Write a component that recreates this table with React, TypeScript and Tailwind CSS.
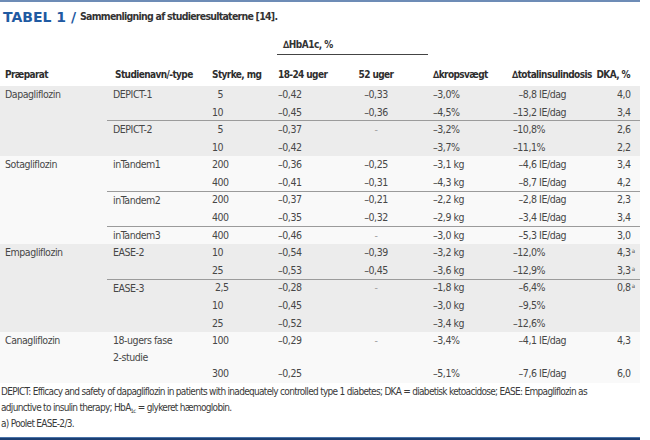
import React from "react";

type DataRow = {
  s: string;
  a: string;
  b: string;
  k: string;
  t: string;
  d: string;
  sup?: boolean;
  sIndent?: string;
};

type Study = { name: string; rows: DataRow[] };
type Group = { drug: string; bg: string; studies: Study[] };

const F = "\u2007";

const groups: Group[] = [
  {
    drug: "Dapagliflozin",
    bg: "bg-[#ececec]",
    studies: [
      {
        name: "DEPICT-1",
        rows: [
          { s: F + "5", a: "–0,42", b: "–0,33", k: "–3,0%", t: F + "–8,8 IE/dag", d: "4,0" },
          { s: "10", a: "–0,45", b: "–0,36", k: "–4,5%", t: "–13,2 IE/dag", d: "3,4" },
        ],
      },
      {
        name: "DEPICT-2",
        rows: [
          { s: F + "5", a: "–0,37", b: "-", k: "–3,2%", t: "–10,8%", d: "2,6" },
          { s: "10", a: "–0,42", b: "", k: "–3,7%", t: "–11,1%", d: "2,2" },
        ],
      },
    ],
  },
  {
    drug: "Sotagliflozin",
    bg: "bg-[#f9f9f9]",
    studies: [
      {
        name: "inTandem1",
        rows: [
          { s: "200", a: "–0,36", b: "–0,25", k: "–3,1 kg", t: F + "–4,6 IE/dag", d: "3,4" },
          { s: "400", a: "–0,41", b: "–0,31", k: "–4,3 kg", t: F + "–8,7 IE/dag", d: "4,2" },
        ],
      },
      {
        name: "inTandem2",
        rows: [
          { s: "200", a: "–0,37", b: "–0,21", k: "–2,2 kg", t: F + "–2,8 IE/dag", d: "2,3" },
          { s: "400", a: "–0,35", b: "–0,32", k: "–2,9 kg", t: F + "–3,4 IE/dag", d: "3,4" },
        ],
      },
      {
        name: "inTandem3",
        rows: [{ s: "400", a: "–0,46", b: "-", k: "–3,0 kg", t: F + "–5,3 IE/dag", d: "3,0" }],
      },
    ],
  },
  {
    drug: "Empagliflozin",
    bg: "bg-[#ececec]",
    studies: [
      {
        name: "EASE-2",
        rows: [
          { s: "10", a: "–0,54", b: "–0,39", k: "–3,2 kg", t: "–12,0%", d: "4,3", sup: true },
          { s: "25", a: "–0,53", b: "–0,45", k: "–3,6 kg", t: "–12,9%", d: "3,3", sup: true },
        ],
      },
      {
        name: "EASE-3",
        rows: [
          { s: "2,5", a: "–0,28", b: "-", k: "–1,8 kg", t: F + "–6,4%", d: "0,8", sup: true, sIndent: "pl-[3px]" },
          { s: "10", a: "–0,45", b: "", k: "–3,0 kg", t: F + "–9,5%", d: "" },
          { s: "25", a: "–0,52", b: "", k: "–3,4 kg", t: "–12,6%", d: "" },
        ],
      },
    ],
  },
];

function DataCells({ r }: { r: DataRow }) {
  return (
    <>
      <div className={`w-[60px] whitespace-pre ${r.sIndent ?? ""}`}>{r.s}</div>
      <div className="w-[73px] pl-[6px]">{r.a}</div>
      <div className="w-[60px] text-center pl-[2px]">
        {r.b === "-" ? <span className="text-[#a0a0a0]">-</span> : r.b}
      </div>
      <div className="w-[100px] pl-[28px] whitespace-nowrap">{r.k}</div>
      <div className="w-[95px] pl-[8px] whitespace-pre">{r.t}</div>
      <div className="w-[40px] pl-[17px] whitespace-nowrap">
        {r.d}
        {r.sup && <span className="text-[6px] relative -top-[3px] ml-[1px]">a</span>}
      </div>
    </>
  );
}

export default function App() {
  return (
    <div
      className="w-[650px] h-[440px] bg-white overflow-hidden text-[#474747]"
      style={{ fontFamily: '"DejaVu Sans Condensed", "Liberation Sans", sans-serif' }}
    >
      <div className="w-[640px] flex flex-col">
        <div className="h-[2px] bg-[#6d8cb6]" />
        {/* title */}
        <div className="h-[30px] flex items-center pl-[3px] pb-[1px]">
          <span
            className="text-[14px] font-bold text-[#1f5aa2] leading-none"
            style={{ fontFamily: '"DejaVu Sans", sans-serif' }}
          >
            TABEL 1 /
          </span>
          <span className="ml-[4px] text-[10.5px] font-bold text-[#333] leading-none tracking-[-0.75px]">
            Sammenligning af studieresultaterne [14].
          </span>
        </div>
        {/* HbA1c group header */}
        <div className="h-[23px] flex items-end">
          <div className="ml-[277px] w-[151px] border-b border-[#444] pl-[6px] pb-[3px] text-[10px] font-bold text-[#333] leading-[12px] tracking-[-0.5px]">
            ∆HbA1c, %
          </div>
        </div>
        {/* column headers */}
        <div className="h-[31px] flex items-center text-[10px] font-bold text-[#2e2e2e] pt-[12px] pb-[4px] tracking-[-0.6px] whitespace-nowrap">
          <div className="w-[107px] pl-[5px]">Præparat</div>
          <div className="w-[105px] pl-[8px]">Studienavn/-type</div>
          <div className="w-[60px]">Styrke, mg</div>
          <div className="w-[73px] pl-[6px]">18-24 uger</div>
          <div className="w-[60px] text-center pl-[2px]">52 uger</div>
          <div className="w-[100px] pl-[28px]">∆kropsvægt</div>
          <div className="w-[95px] pl-[7px]">∆totalinsulindosis</div>
          <div className="w-[40px] flex justify-end pr-[10px]">DKA, %</div>
        </div>
        {/* body */}
        <div className="flex flex-col text-[10.5px] tracking-[-0.45px]">
          {groups.map((g) => (
            <div key={g.drug} className={`flex ${g.bg}`}>
              <div className="w-[107px] pl-[5px] leading-[17.6px]">{g.drug}</div>
              <div className="flex flex-col">
                {g.studies.map((st, si) => (
                  <div
                    key={st.name}
                    className={`flex ${si > 0 ? "border-t border-[#9b9b9b] -mt-px" : ""}`}
                  >
                    <div className="w-[105px] pl-[6px] leading-[17.6px]">{st.name}</div>
                    <div className="flex flex-col">
                      {st.rows.map((r, ri) => (
                        <div key={ri} className="flex h-[17.6px] items-center">
                          <DataCells r={r} />
                        </div>
                      ))}
                    </div>
                  </div>
                ))}
              </div>
            </div>
          ))}
          {/* Canagliflozin */}
          <div className="flex bg-[#f9f9f9]">
            <div className="w-[107px] pl-[5px] leading-[17.6px]">Canagliflozin</div>
            <div className="w-[105px] pl-[6px] leading-[17px]">
              18-ugers fase
              <br />
              2-studie
            </div>
            <div className="flex flex-col">
              <div className="flex h-[33px] items-start leading-[17.6px]">
                <DataCells r={{ s: "100", a: "–0,29", b: "-", k: "–3,4%", t: F + "–4,1 IE/dag", d: "4,3" }} />
              </div>
              <div className="flex h-[18px] items-center">
                <DataCells r={{ s: "300", a: "–0,25", b: "", k: "–5,1%", t: F + "–7,6 IE/dag", d: "6,0" }} />
              </div>
            </div>
          </div>
        </div>
        {/* footer */}
        <div className="pt-[1px] pl-[1px] text-[10px] leading-[16px] text-[#3a3a3a] whitespace-nowrap tracking-[-0.7px]">
          <div>
            DEPICT: Efficacy and safety of dapagliflozin in patients with inadequately controlled type 1 diabetes; DKA =
            diabetisk ketoacidose; EASE: Empagliflozin as
          </div>
          <div>
            adjunctive to insulin therapy; HbA<sub className="text-[6px]">1c</sub> = glykeret hæmoglobin.
          </div>
          <div>a) Poolet EASE-2/3.</div>
        </div>
      </div>
      <div className="w-[640px] h-[5px] bg-[#1b3f72] border-t border-[#4a73a8] mt-[5px]" />
    </div>
  );
}
